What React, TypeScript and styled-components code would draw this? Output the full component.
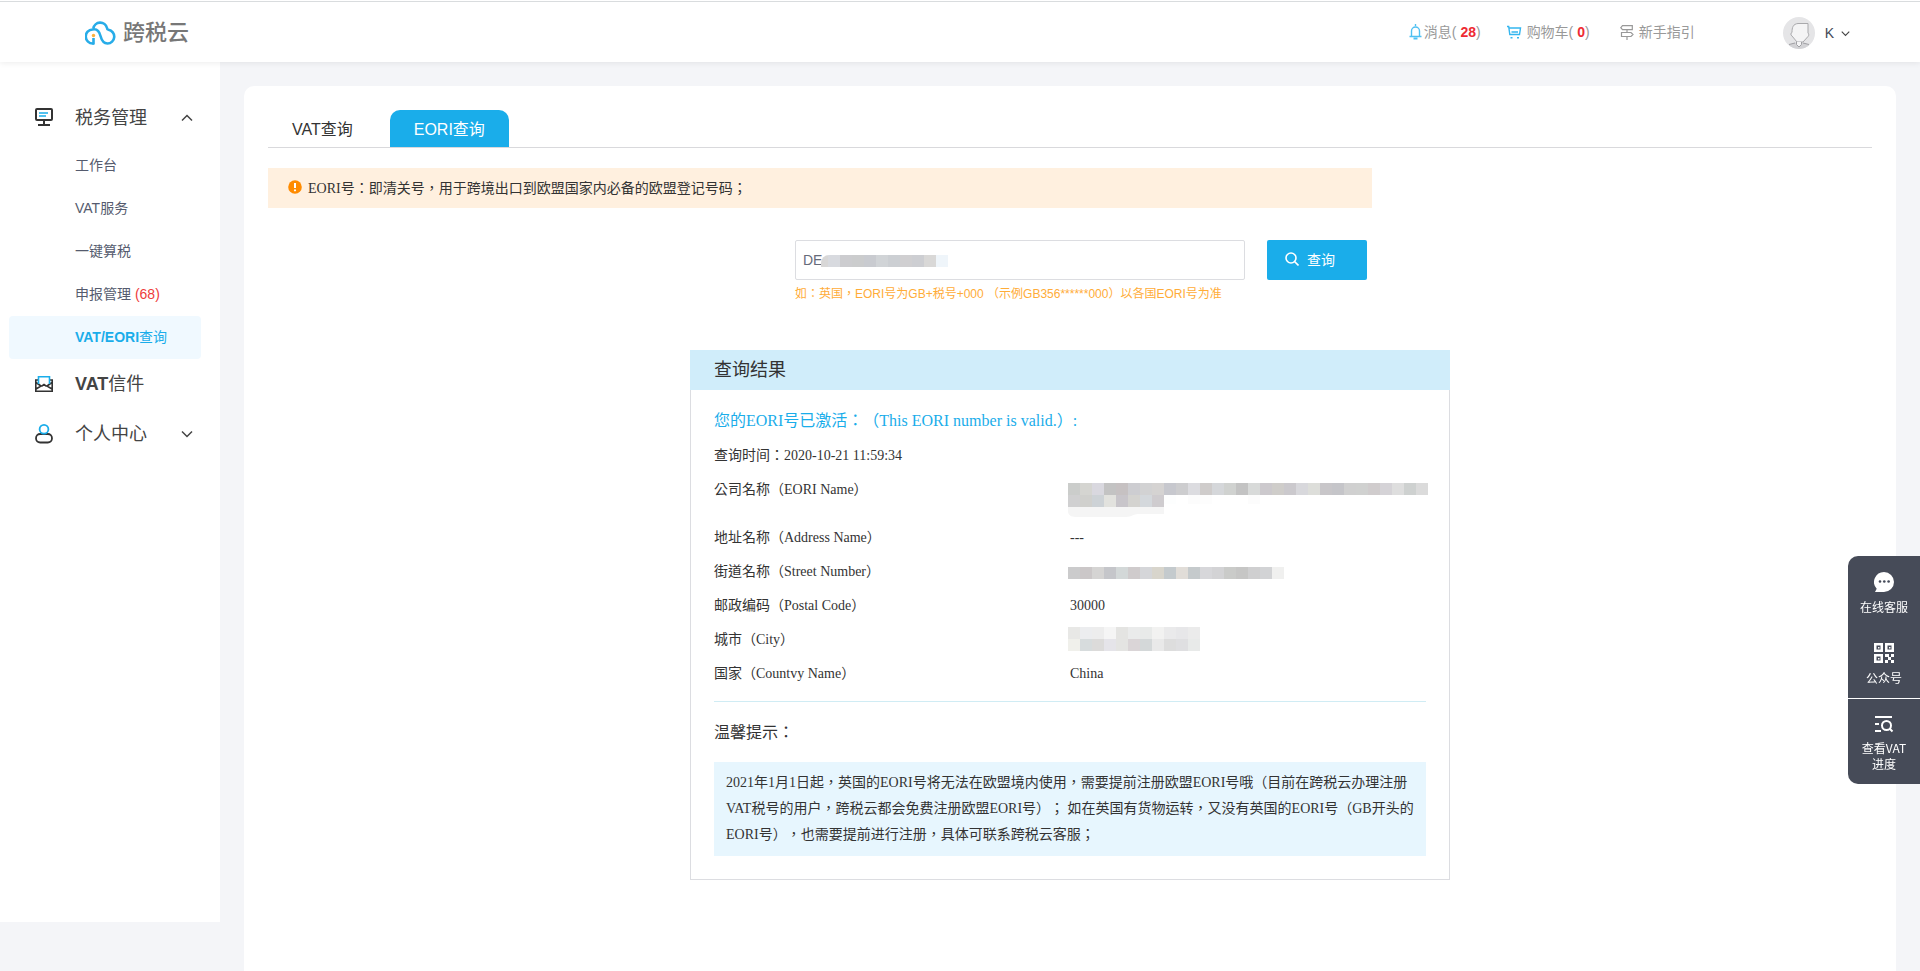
import React from 'react';
import styled, { createGlobalStyle } from 'styled-components';

const SANS = `"Liberation Sans", "Noto Sans CJK TC", sans-serif`;
const SERIF = `"Liberation Serif", "Noto Sans CJK TC", serif`;
const BLUE = '#1aadea';

const GlobalStyle = createGlobalStyle`
  *, *::before, *::after { box-sizing: border-box; }
  body {
    margin: 0;
    background: #f4f5f8;
    color: #333;
    font-family: ${SANS};
    font-size: 14px;
    text-spacing-trim: space-all;
  }
  a { color: inherit; text-decoration: none; }
  button, input { font: inherit; }
  h1, h2, h3, p, ul { margin: 0; padding: 0; font-weight: 400; }
  ul { list-style: none; }
`;

const Header = styled.header`
  position: relative;
  display: flex;
  align-items: center;
  justify-content: space-between;
  height: 62px;
  padding: 4px 70px 0 85px;
  background: #fff;
  box-shadow: 0 1px 6px rgba(0, 0, 0, 0.08);

  &::before {
    content: '';
    position: absolute;
    top: 1px;
    left: 0;
    right: 0;
    height: 1px;
    background: #d9dcde;
  }
`;

const Logo = styled.a`
  display: flex;
  align-items: center;
  gap: 6px;
  color: #777;
  font-size: 22px;
  line-height: 26px;
  font-weight: 500;
`;

const HeaderNav = styled.nav`
  display: flex;
  align-items: center;
  color: #999;
  line-height: 18px;
`;

const HeaderLink = styled.a<{ $gap: number; $after: number }>`
  display: flex;
  align-items: center;
  gap: ${(p) => p.$gap}px;
  margin-right: ${(p) => p.$after}px;
  padding-bottom: 2px;
`;

const Count = styled.b`
  color: #ee2b33;
`;

const UserButton = styled.button`
  display: flex;
  align-items: center;
  padding: 0;
  border: 0;
  background: none;
  color: #444a58;
  cursor: pointer;
`;

const UserName = styled.span`
  margin: 0 7px 0 10px;
`;

const Layout = styled.div`
  display: flex;
  align-items: flex-start;
`;

const Sidebar = styled.aside`
  flex: 0 0 220px;
  min-height: calc(100vh - 111px);
  padding-top: 30px;
  background: #fff;
`;

const MenuHead = styled.button<{ $height: number }>`
  display: grid;
  grid-template-columns: 18px 1fr 12px;
  column-gap: 22px;
  align-items: center;
  width: 100%;
  height: ${(p) => p.$height}px;
  padding: 0 27px 0 35px;
  border: 0;
  background: none;
  color: #444;
  font-size: 18px;
  line-height: 24px;
  text-align: left;
  cursor: pointer;

  b { font-weight: 700; }
`;

const MenuLink = styled.a<{ $active?: boolean }>`
  display: block;
  height: 43px;
  margin: 0 19px 0 9px;
  padding-left: 66px;
  border-radius: 4px;
  background: ${(p) => (p.$active ? '#f0f9ff' : 'transparent')};
  color: ${(p) => (p.$active ? BLUE : '#555b6e')};
  line-height: 43px;

  b { font-weight: 700; }
`;

const Alert = styled.span`
  color: #ee3b3b;
`;

const Main = styled.main`
  flex: 1;
  min-width: 0;
  padding: 24px 24px 0;
`;

const Card = styled.section`
  min-height: calc(100vh - 86px);
  padding: 24px;
  border-radius: 10px 10px 0 0;
  background: #fff;
`;

const Tabs = styled.div`
  display: flex;
  gap: 13px;
  border-bottom: 1px solid #d9d9dc;
`;

const Tab = styled.button<{ $active?: boolean }>`
  height: 37px;
  padding: 0 24px 2px;
  border: 0;
  border-radius: 10px 10px 0 0;
  background: ${(p) => (p.$active ? BLUE : 'transparent')};
  color: ${(p) => (p.$active ? '#fff' : '#333')};
  font-size: 16px;
  cursor: pointer;
`;

const Notice = styled.p`
  display: flex;
  align-items: center;
  gap: 6px;
  max-width: 1104px;
  height: 40px;
  margin-top: 20px;
  padding: 0 20px 2px;
  background: #fff0df;
  font-family: ${SERIF};
`;

const SearchForm = styled.form`
  display: flex;
  justify-content: center;
  gap: 22px;
  margin-top: 32px;
  padding-left: 22px;
`;

const Field = styled.div`
  position: relative;
  flex: 0 1 450px;
`;

const FieldInput = styled.input`
  display: block;
  width: 100%;
  height: 40px;
  padding: 0 7px;
  border: 1px solid #dcdde1;
  border-radius: 2px;
  color: #666b7a;
  outline: 0;
`;

const FieldMask = styled.span`
  position: absolute;
  top: 15px;
  left: 26px;
  display: flex;
  justify-content: flex-end;
  width: 127px;
  border-radius: 8px 0 0 0;
  overflow: hidden;

  svg { flex: none; }
`;

const Hint = styled.p`
  margin-top: 5px;
  color: #ffac38;
  font-size: 12px;
  line-height: 18px;
  white-space: nowrap;
`;

const SubmitButton = styled.button`
  display: flex;
  align-items: center;
  gap: 8px;
  width: 100px;
  height: 40px;
  padding: 0 0 2px 18px;
  border: 0;
  border-radius: 2px;
  background: ${BLUE};
  color: #fff;
  cursor: pointer;
`;

const Panel = styled.section`
  max-width: 760px;
  margin: 47px auto 0;
  border: 1px solid #dcdde1;
  border-top: 0;
  font-family: ${SERIF};
`;

const PanelTitle = styled.h2`
  height: 40px;
  margin: 0 -1px;
  padding: 0 24px;
  background: #d0edfa;
  font-size: 18px;
  line-height: 40px;
`;

const PanelBody = styled.div`
  padding: 14px 23px 23px;
`;

const Status = styled.p`
  color: ${BLUE};
  font-size: 16px;
  line-height: 34px;
`;

const QueryTime = styled.p`
  padding-top: 1px;
  line-height: 34px;
`;

const Details = styled.table`
  width: 100%;
  margin-bottom: 10px;
  border-collapse: collapse;
  table-layout: fixed;

  th, td {
    height: 34px;
    padding: 0;
    font-weight: 400;
    line-height: 34px;
    text-align: left;
    vertical-align: top;
  }
`;

const Masked = styled.td<{ $top: number }>`
  && {
    padding-top: ${(p) => p.$top}px;
    line-height: 0;
  }
  svg { margin-left: -2px; }
`;

const CompanyRow = styled.tr`
  height: 48px;
`;

const TipTitle = styled.h3`
  padding-top: 2px;
  border-top: 1px solid #d0ecf4;
  font-size: 16px;
  line-height: 58px;
`;

const TipText = styled.p`
  padding: 8px 12px;
  background: #e7f6fe;
  line-height: 26px;
`;

const FloatBar = styled.aside`
  position: fixed;
  top: 556px;
  right: 0;
  display: flex;
  flex-direction: column;
  width: 72px;
  border-radius: 10px 0 0 10px;
  overflow: hidden;
  background: rgba(64, 69, 83, 0.97);
  font-family: "Noto Sans CJK SC", sans-serif;
`;

const FloatButton = styled.button<{ $divided?: boolean }>`
  display: flex;
  flex-direction: column;
  align-items: center;
  gap: 7px;
  padding: 16px 0 12px;
  border: 0;
  border-top: ${(p) => (p.$divided ? '1px solid #fff' : '0')};
  background: none;
  color: #fff;
  font-size: 12px;
  line-height: 16px;
  cursor: pointer;
`;

function Mosaic({ rows, cell = 12 }: { rows: string[][]; cell?: number }) {
  const cols = Math.max(...rows.map((r) => r.length));
  return (
    <svg width={cols * cell} height={rows.length * 12} shapeRendering="crispEdges" aria-hidden="true">
      {rows.map((row, y) =>
        row.map((fill, x) => (
          <rect key={`${x}-${y}`} x={x * cell} y={y * 12} width={cell} height={12} fill={`#${fill}`} />
        )),
      )}
    </svg>
  );
}

const list = (s: string) => s.split(' ');

const COMPANY = [
  list('cbcdcb d5d5d1 d9d8df c3c3c3 c6c1c2 cdcdd1 d2d2d3 d5d3d2 c7c8ce cdcdcf dcdce0 cfcccb d5d7da d0d2d0 c3c3c3 d8dad9 ccc9cd cfcdca cbc9cd d8d8dc dddeda c8c6c9 c5c5c9 d0d0d0 d0d1d0 d0cccd d5d3d7 dedede ced1d0 dbdbdb'),
  list('d0d0d1 d0d0cd cdd2d6 e2e2de c8c5ca d4d3d0 d4d8dc cfcccf fdfefe ffffff fcfcfc fdfdfd ffffff ffffff ffffff fcfcfc'),
];
const COMPANY_FADE = list('f2f3f3 f4f4f4 f2f5f4 f7f9f7 f6f8f8 f5f5f5 f7f7f7 f4f4f4');
const STREET = [
  list('cbcbcc cbc7c8 d5d4d3 c5c6ca d3d8d8 cfcbcc d5d6d9 d8d5cc c4cacd e1ddd8 c5cacc d7d7da d3d3d5 cacbc9 c6c6c5 cfcfd0 d2d3d5 f0f0ef'),
];
const CITY = [
  list('e8e8e6 ecedef ededed f5f5f5 e4e4e2 eaebeb e8eae9 f2f2f1 eaeaeb e7e7e9 ebebeb'),
  list('f0f0eb d7dcdd dcdbda e5e4e9 e4e4e2 dad5d7 d4d8d9 e9e9e9 dddddd dfdfe1 e8eae9'),
];
const NUMBER = [list('d8d7d7 d8dadf cccccf cbcccd c9cbd0 d1d4d7 cccfd3 d0cfd1 cdced2 d9d8d7 eff5fa')];

const LogoMark = () => (
  <svg width="32" height="26" viewBox="0 0 32 26" fill="none" aria-hidden="true">
    <path
      d="M9 23.500H8A7 7 0 0 1 7.500 9.500C12 8.500 14.500 12 15.500 16c1.200 4.500 3.500 7.500 7 7.500a6.900 6.900 0 0 0 1-13.700C22.500 9.600 22 9.500 22 8A7 7 0 0 0 8.300 8.500"
      stroke="#27ace8"
      strokeWidth="2.600"
    />
    <path d="M8.500 18v6.500" stroke="#27ace8" strokeWidth="2.600" />
    <circle cx="8.500" cy="15.500" r="1.700" fill="#fbb03b" />
  </svg>
);

const BellIcon = () => (
  <svg width="13" height="16" viewBox="0 0 13 16" fill="none" stroke="#4fc0f2" strokeWidth="1.400" aria-hidden="true">
    <path d="M6.500 0v2M2.500 12V7a4 4 0 0 1 8 0v5M.5 12.500h12" />
    <path d="M4.500 14.500h4" strokeWidth="2" />
  </svg>
);

const CartIcon = () => (
  <svg width="15" height="14" viewBox="0 0 15 14" fill="none" stroke="#35b6ef" strokeWidth="1.400" aria-hidden="true">
    <path d="M0 1.500h1.700L2.800 9.500h9.700L13.500 3H2M4.500 7h6.500" />
    <path d="M3.500 12.800h2M10 12.800h2" strokeWidth="1.600" />
  </svg>
);

const SignIcon = () => (
  <svg width="14" height="15" viewBox="0 0 14 15" fill="none" stroke="#999" strokeWidth="1.200" aria-hidden="true">
    <path d="M2.500.7h9.800v4H2.500L.8 2.700zM1.500 7.500h9.500l2 2-2 2H1.500zM7 4.700v2.800M7 11.500V15" />
  </svg>
);

const AvatarIcon = () => (
  <svg width="32" height="32" viewBox="0 0 32 32" fill="none" aria-hidden="true">
    <circle cx="16" cy="16" r="16" fill="#e5e5e7" />
    <path d="M6 28.500c2-2 5-2.500 7-3h6c3 .5 5 1 7 3A16 16 0 0 1 6 28.500z" fill="#d2d2d5" />
    <path
      d="M9 19c-1.500-1-1.500-3 0-3.500 0-5 1-8.500 6-9h10v9.500c1 1 1 2.500 0 3.500l-5 5.500h-6z"
      fill="#f4f4f5"
      stroke="#a9a9ac"
    />
    <path d="M13.500 25v2.500l2.500 2.500 2.500-2.500V25M6 27.500l6-1.500M26 27.500l-6-1.500" stroke="#a0a0a4" fill="#f4f4f5" />
  </svg>
);

const Chevron = ({ up, size = 12 }: { up?: boolean; size?: number }) => (
  <svg width={size} height={size} viewBox="0 0 12 12" fill="none" stroke="#444" strokeWidth="1.500" aria-hidden="true">
    <path d={up ? 'M1 8.500l5-5 5 5' : 'M1 3.500l5 5 5-5'} />
  </svg>
);

const MonitorIcon = () => (
  <svg width="18" height="20" viewBox="0 0 18 20" fill="none" stroke="#333" strokeWidth="2" aria-hidden="true">
    <rect x="1" y="1" width="16" height="11" rx="1" />
    <path d="M9 12v4M3 17h12" />
    <path d="M4 5h9M4 8h7" stroke={BLUE} strokeWidth="1.600" />
  </svg>
);

const MailIcon = () => (
  <svg width="18" height="18" viewBox="0 0 18 18" fill="none" stroke="#333" strokeWidth="1.600" aria-hidden="true">
    <path d="M3 5H.8v11.200h16.400V5H15M1 7.500l5 3.500M17 7.500l-5 3.500M1 14l5-3h1l2-1.500 2 1.500h1l5 3" />
    <path d="M3.500 9V1.800h11V9" stroke={BLUE} />
  </svg>
);

const PersonIcon = () => (
  <svg width="18" height="20" viewBox="0 0 18 20" fill="none" strokeWidth="1.800" aria-hidden="true">
    <rect x="1" y="10" width="16" height="8.500" rx="4.200" stroke="#333" />
    <circle cx="9" cy="5.300" r="4.400" stroke={BLUE} fill="#fff" />
  </svg>
);

const WarnIcon = () => (
  <svg width="14" height="14" viewBox="0 0 14 14" aria-hidden="true">
    <circle cx="7" cy="7" r="6.800" fill="#ff8b00" />
    <path d="M7 3v5" stroke="#fff" strokeWidth="2" />
    <circle cx="7" cy="10.300" r="1.100" fill="#fff" />
  </svg>
);

const SearchIcon = () => (
  <svg width="14" height="14" viewBox="0 0 14 14" fill="none" stroke="#fff" strokeWidth="1.600" aria-hidden="true">
    <circle cx="6" cy="6" r="5" />
    <path d="M9.500 9.500l4 4" />
  </svg>
);

const ChatIcon = () => (
  <svg width="20" height="20" viewBox="0 0 20 20" aria-hidden="true">
    <path d="M10 0a10 10 0 1 1 0 20H1l1.700-3.200A10 10 0 0 1 10 0z" fill="#fff" />
    <g fill="#454a59">
      <circle cx="6" cy="9.500" r="1.300" />
      <circle cx="10.300" cy="9.500" r="1.300" />
      <circle cx="14.600" cy="9.500" r="1.300" />
    </g>
  </svg>
);

const QrIcon = () => (
  <svg width="20" height="20" viewBox="0 0 20 20" fill="none" aria-hidden="true">
    <g stroke="#fff" strokeWidth="2.500">
      <rect x="1.250" y="1.250" width="6.500" height="6.500" />
      <rect x="12.250" y="1.250" width="6.500" height="6.500" />
      <rect x="1.250" y="12.250" width="6.500" height="6.500" />
    </g>
    <path
      d="M4 4h1.500v1.500H4zM15 4h1.500v1.500H15zM4 15h1.500v1.500H4zM11 11h4v3h-4zM17 11h3v3h-3zM14 14h3v3h-3zM11 17h3v3h-3zM17 17h3v3h-3z"
      fill="#fff"
    />
  </svg>
);

const ProgressIcon = () => (
  <svg width="20" height="18" viewBox="0 0 20 18" fill="none" stroke="#fff" strokeWidth="2" aria-hidden="true">
    <path d="M1 2h17M1 9h4M1 16h6M15.500 13.500l3 3" />
    <circle cx="12.500" cy="10.500" r="4.500" />
  </svg>
);

const CompanyMask = () => (
  <svg width="360" height="34" aria-hidden="true">
    <path d="M0 24h96v7H70c-5 0-6 3-12 3H10C4 34 0 33 0 28z" fill={`#${COMPANY_FADE[5]}`} />
    {COMPANY.map((row, y) =>
      row.map((fill, x) => (
        <rect
          key={`${x}-${y}`}
          x={x * 12}
          y={y * 12}
          width={12}
          height={y === 1 && x > 7 ? 9 : 12}
          fill={`#${fill}`}
          shapeRendering="crispEdges"
        />
      )),
    )}
  </svg>
);

export default function App() {
  return (
    <>
      <GlobalStyle />
      <Header>
        <Logo href="#">
          <LogoMark />
          跨税云
        </Logo>
        <HeaderNav>
          <HeaderLink href="#" $gap={2} $after={26}>
            <BellIcon />
            <span>消息( <Count>28</Count>)</span>
          </HeaderLink>
          <HeaderLink href="#" $gap={5} $after={30}>
            <CartIcon />
            <span>购物车( <Count>0</Count>)</span>
          </HeaderLink>
          <HeaderLink href="#" $gap={5} $after={88}>
            <SignIcon />
            <span>新手指引</span>
          </HeaderLink>
          <UserButton type="button">
            <AvatarIcon />
            <UserName>K</UserName>
            <Chevron size={9} />
          </UserButton>
        </HeaderNav>
      </Header>

      <Layout>
        <Sidebar>
          <nav>
            <MenuHead type="button" $height={52} aria-expanded="true">
              <MonitorIcon />
              <span>税务管理</span>
              <Chevron up />
            </MenuHead>
            <ul>
              <li><MenuLink href="#">工作台</MenuLink></li>
              <li><MenuLink href="#">VAT服务</MenuLink></li>
              <li><MenuLink href="#">一键算税</MenuLink></li>
              <li><MenuLink href="#">申报管理 <Alert>(68)</Alert></MenuLink></li>
              <li><MenuLink href="#" $active><b>VAT/EORI</b>查询</MenuLink></li>
            </ul>
            <MenuHead type="button" $height={50}>
              <MailIcon />
              <span><b>VAT</b>信件</span>
            </MenuHead>
            <MenuHead type="button" $height={50} aria-expanded="false">
              <PersonIcon />
              <span>个人中心</span>
              <Chevron />
            </MenuHead>
          </nav>
        </Sidebar>

        <Main>
          <Card>
            <Tabs role="tablist">
              <Tab type="button" role="tab" aria-selected="false">VAT查询</Tab>
              <Tab type="button" role="tab" aria-selected="true" $active>EORI查询</Tab>
            </Tabs>

            <Notice>
              <WarnIcon />
              <span>EORI号：即清关号，用于跨境出口到欧盟国家内必备的欧盟登记号码；</span>
            </Notice>

            <SearchForm onSubmit={(e) => e.preventDefault()}>
              <Field>
                <FieldInput type="text" aria-label="EORI号" defaultValue="DE" />
                <FieldMask><Mosaic rows={NUMBER} /></FieldMask>
                <Hint>如：英国，EORI号为GB+税号+000 （示例GB356******000）以各国EORI号为准</Hint>
              </Field>
              <SubmitButton type="submit">
                <SearchIcon />
                查询
              </SubmitButton>
            </SearchForm>

            <Panel>
              <PanelTitle>查询结果</PanelTitle>
              <PanelBody>
                <Status>您的EORI号已激活：（This EORI number is valid.）:</Status>
                <QueryTime>查询时间：2020-10-21 11:59:34</QueryTime>
                <Details>
                  <tbody>
                    <CompanyRow>
                      <th scope="row">公司名称（EORI Name）</th>
                      <Masked $top={10}><CompanyMask /></Masked>
                    </CompanyRow>
                    <tr>
                      <th scope="row">地址名称（Address Name）</th>
                      <td>---</td>
                    </tr>
                    <tr>
                      <th scope="row">街道名称（Street Number）</th>
                      <Masked $top={12}><Mosaic rows={STREET} /></Masked>
                    </tr>
                    <tr>
                      <th scope="row">邮政编码（Postal Code）</th>
                      <td>30000</td>
                    </tr>
                    <tr>
                      <th scope="row">城市（City）</th>
                      <Masked $top={4}><Mosaic rows={CITY} /></Masked>
                    </tr>
                    <tr>
                      <th scope="row">国家（Countvy Name）</th>
                      <td>China</td>
                    </tr>
                  </tbody>
                </Details>
                <TipTitle>温馨提示：</TipTitle>
                <TipText>
                  2021年1月1日起，英国的EORI号将无法在欧盟境内使用，需要提前注册欧盟EORI号哦（目前在跨税云办理注册VAT税号的用户，跨税云都会免费注册欧盟EORI号）；
                  如在英国有货物运转，又没有英国的EORI号（GB开头的EORI号），也需要提前进行注册，具体可联系跨税云客服；
                </TipText>
              </PanelBody>
            </Panel>
          </Card>
        </Main>
      </Layout>

      <FloatBar>
        <FloatButton type="button">
          <ChatIcon />
          在线客服
        </FloatButton>
        <FloatButton type="button">
          <QrIcon />
          公众号
        </FloatButton>
        <FloatButton type="button" $divided>
          <ProgressIcon />
          <span>查看VAT<br />进度</span>
        </FloatButton>
      </FloatBar>
    </>
  );
}
